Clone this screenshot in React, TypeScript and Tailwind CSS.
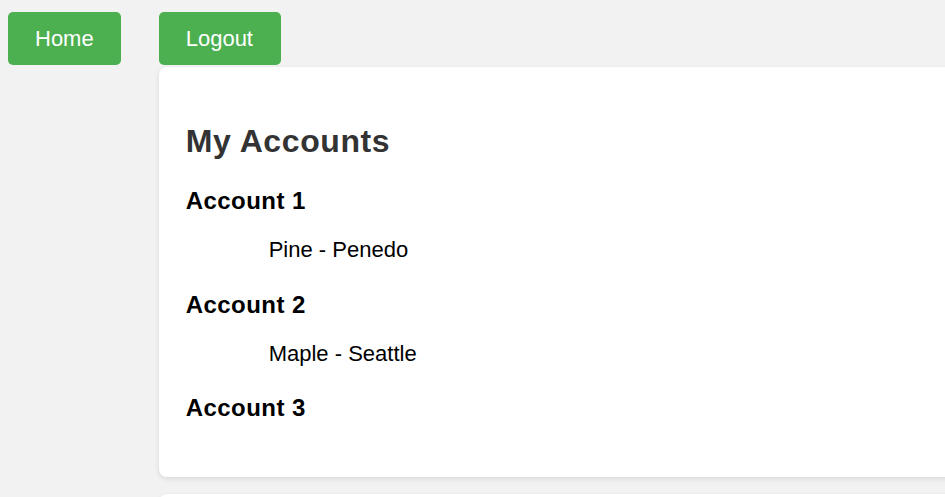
import React from "react";

const accounts = [
  { name: "Account 1", items: ["Pine - Penedo"], mt: "mt-[27px]" },
  { name: "Account 2", items: ["Maple - Seattle"], mt: "mt-[29px]" },
  { name: "Account 3", items: [] as string[], mt: "mt-[28px]" },
];

export default function App() {
  return (
    <div
      className="h-[497px] w-[945px] overflow-hidden bg-[#f2f2f2]"
      style={{ fontFamily: '"Liberation Sans", Arial, sans-serif' }}
    >
      <div className="flex items-start pt-[12px]">
        <button className="ml-[8px] rounded-[5px] bg-[#4caf50] px-[27px] py-[14px] text-[22px] leading-[25px] text-white">
          Home
        </button>
        <div className="ml-[38px] flex w-[900px] shrink-0 flex-col items-start">
          <button className="rounded-[5px] bg-[#4caf50] pl-[27px] pr-[28px] py-[14px] text-[22px] leading-[25px] text-white">
            Logout
          </button>
          <div className="mt-[2px] w-full rounded-[8px] bg-white pb-[55px] pl-[27px] pt-[56px] shadow-[0_2px_5px_rgba(0,0,0,0.1)]">
            <h1 className="text-[32px] font-bold leading-[37px] tracking-[0.6px] text-[#333333]">My Accounts</h1>
            {accounts.map((a) => (
              <div key={a.name} className={a.mt}>
                <h3 className="text-[24px] font-bold leading-[28px] tracking-[0.45px] text-black">{a.name}</h3>
                {a.items.map((it) => (
                  <div key={it} className="ml-[83px] mt-[22px] text-[22px] leading-[25px] text-black">
                    {it}
                  </div>
                ))}
              </div>
            ))}
          </div>
          <div className="mt-[17px] h-[100px] w-full rounded-[8px] bg-white shadow-[0_2px_5px_rgba(0,0,0,0.1)]" />
        </div>
      </div>
    </div>
  );
}
